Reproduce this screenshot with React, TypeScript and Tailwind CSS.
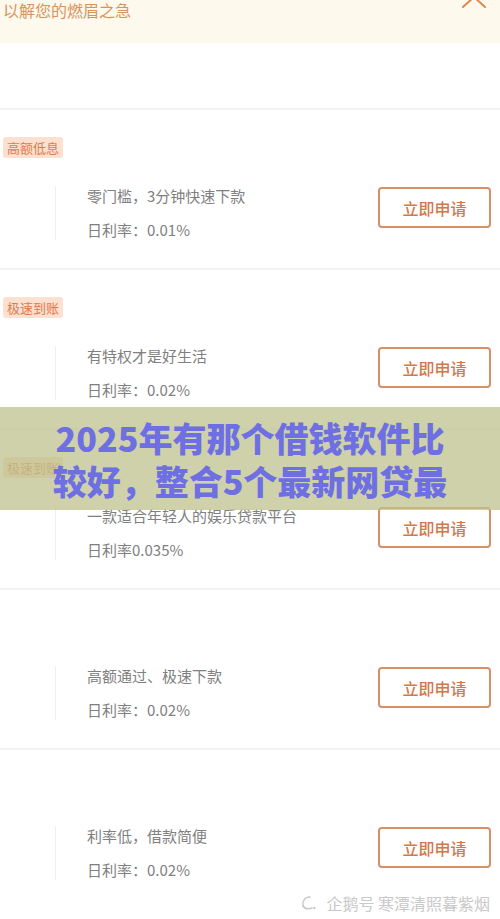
import React from 'react';

type Loan = {
  tag?: string;
  title: string;
  rate: string;
};

const loans: Loan[] = [
  { tag: '高额低息', title: '零门槛，3分钟快速下款', rate: '日利率：0.01%' },
  { tag: '极速到账', title: '有特权才是好生活', rate: '日利率：0.02%' },
  { tag: '极速到账', title: '一款适合年轻人的娱乐贷款平台', rate: '日利率0.035%' },
  { title: '高额通过、极速下款', rate: '日利率：0.02%' },
  { title: '利率低，借款简便', rate: '日利率：0.02%' },
];

function LoanRow({ loan }: { loan: Loan }) {
  return (
    <section className="h-[160px] border-t-2 border-[#f3f3f3] pt-[24px]">
      <div className="h-[21px] pl-[3px]">
        {loan.tag && (
          <span className="inline-flex h-[21px] items-center rounded-[3px] bg-[#fde0cf] px-[4px] text-[13px] leading-none text-[#e27a4c]">
            {loan.tag}
          </span>
        )}
      </div>
      <div className="mt-[31px] flex items-start justify-between pr-[9px]">
        <div className="ml-[55px] flex h-[54px] flex-col border-l border-[#efefef] pl-[31px] text-[15px] leading-[20px] text-[#808080]">
          <p>{loan.title}</p>
          <p className="mt-[14px]">{loan.rate}</p>
        </div>
        <button className="mt-[1px] flex h-[41px] w-[113px] items-center justify-center rounded-[4px] border-2 border-[#d5906a] text-[16px] font-medium text-[#d0784a]">
          立即申请
        </button>
      </div>
    </section>
  );
}

export default function App() {
  return (
    <div
      className="relative h-[919px] w-[500px] overflow-hidden bg-white"
      style={{ fontFamily: '"Noto Sans CJK SC", "Noto Sans", sans-serif' }}
    >
      {/* Header */}
      <header className="flex h-[43px] items-start justify-between bg-[#fdf9ec] pl-[3px] pr-[13px]">
        <h1 className="text-[16px] leading-[20px] text-[#d9935f]">以解您的燃眉之急</h1>
        <svg width="26" height="14" viewBox="0 0 26 14" className="-mt-[5px]" fill="none">
          <path d="M2 12 L13 2 L24 12" stroke="#e0894f" strokeWidth="2" strokeLinecap="round" strokeLinejoin="round" />
        </svg>
      </header>

      <div className="h-[65px]" />

      {loans.map((loan, i) => (
        <LoanRow key={i} loan={loan} />
      ))}

      {/* Title banner over the list */}
      <div className="absolute left-0 top-[407px] flex h-[103px] w-[500px] flex-col items-center justify-center bg-[rgba(190,194,140,0.75)] text-[34px] font-black leading-[43px] text-[#6d6fe2]">
        <p>2025年有那个借钱软件比</p>
        <p>较好，整合5个最新网贷最</p>
      </div>

      {/* Watermark */}
      <div className="absolute bottom-[6px] right-[10px] flex items-center gap-[8px] bg-white pl-[4px] text-[16px] leading-[20px] text-[#c9c9c9]">
        <svg width="18" height="16" viewBox="0 0 18 16" fill="none">
          <path d="M10 2 C5 2 2 6 3 11" stroke="#c9c9c9" strokeWidth="1.6" strokeLinecap="round" />
          <path d="M3 11 C5 14 9 14 12 13" stroke="#c9c9c9" strokeWidth="1.6" strokeLinecap="round" />
          <circle cx="14.5" cy="13" r="1.2" fill="#c9c9c9" />
        </svg>
        <span>企鹅号 寒潭清照暮紫烟</span>
      </div>
    </div>
  );
}
